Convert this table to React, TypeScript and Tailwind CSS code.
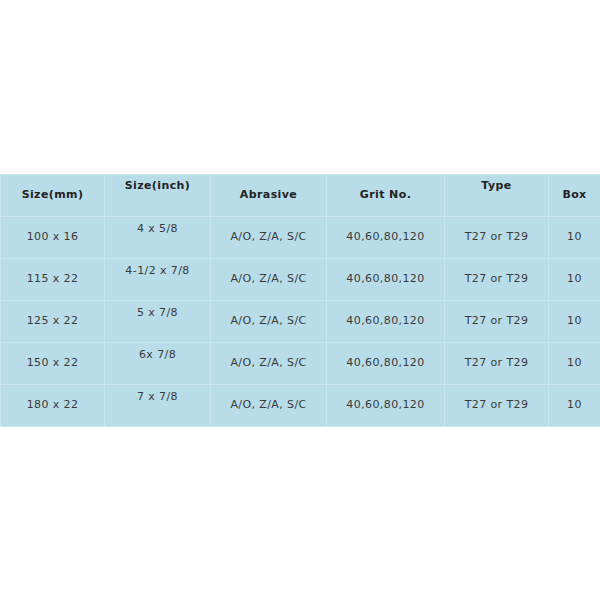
import React from "react";

const rows = [
  ["100 x 16", "4 x 5/8"],
  ["115 x 22", "4-1/2 x 7/8"],
  ["125 x 22", "5 x 7/8"],
  ["150 x 22", "6x 7/8"],
  ["180 x 22", "7 x 7/8"],
];

export default function App() {
  return (
    <div className="w-[600px] h-[600px] bg-white flex flex-col justify-center font-['DejaVu_Sans',Verdana,sans-serif] text-[11px] tracking-[0.4px] text-[#3a3a3a]">
      <table className="w-full table-fixed border-collapse bg-[#b8dde9]">
        <colgroup>
          <col className="w-[104px]" />
          <col className="w-[106px]" />
          <col className="w-[116px]" />
          <col className="w-[118px]" />
          <col className="w-[104px]" />
          <col className="w-[52px]" />
        </colgroup>
        <thead>
          <tr className="h-[42px] font-bold text-[#222]">
            <th className="border border-[#cbe5ee] align-middle">Size(mm)</th>
            <th className="border border-[#cbe5ee] align-top pt-[3px]">Size(inch)</th>
            <th className="border border-[#cbe5ee] align-middle">Abrasive</th>
            <th className="border border-[#cbe5ee] align-middle">Grit No.</th>
            <th className="border border-[#cbe5ee] align-top pt-[3px]">Type</th>
            <th className="border border-[#cbe5ee] align-middle">Box</th>
          </tr>
        </thead>
        <tbody>
          {rows.map(([mm, inch]) => (
            <tr key={mm} className="h-[42px] text-center">
              <td className="border border-[#cbe5ee] align-middle">{mm}</td>
              <td className="border border-[#cbe5ee] align-top pt-[4px]">{inch}</td>
              <td className="border border-[#cbe5ee] align-middle">A/O, Z/A, S/C</td>
              <td className="border border-[#cbe5ee] align-middle">40,60,80,120</td>
              <td className="border border-[#cbe5ee] align-middle">T27 or T29</td>
              <td className="border border-[#cbe5ee] align-middle">10</td>
            </tr>
          ))}
        </tbody>
      </table>
    </div>
  );
}
